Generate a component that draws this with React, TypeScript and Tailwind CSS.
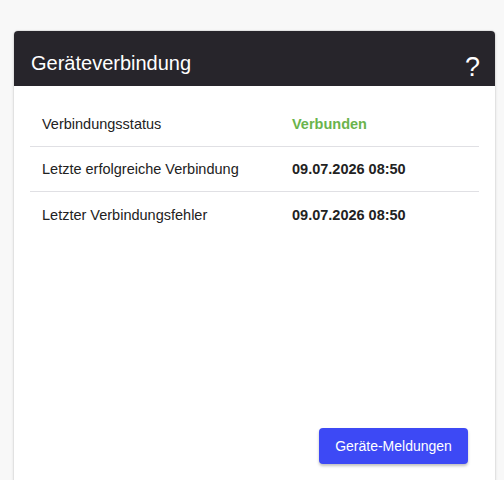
import { ReactNode } from 'react';

type Row = { label: string; value: ReactNode };

const rows: Row[] = [
  {
    label: 'Verbindungsstatus',
    value: <span className="text-[#6ab44c]">Verbunden</span>,
  },
  { label: 'Letzte erfolgreiche Verbindung', value: '09.07.2026 08:50' },
  { label: 'Letzter Verbindungsfehler', value: '09.07.2026 08:50' },
];

export default function App() {
  return (
    <div
      className="min-h-screen h-[480px] overflow-hidden bg-[#f8f8f8] pt-[30px] pl-[13px] pr-[8px]"
      style={{ fontFamily: '"Liberation Sans", Arial, sans-serif' }}
    >
      <div className="flex h-[460px] flex-col overflow-hidden rounded-[5px] border border-[#e2e2e2] bg-white shadow-[0_1px_3px_rgba(0,0,0,0.08)]">
        {/* header */}
        <div className="flex h-[55px] items-end justify-between bg-[#27252b] pl-[17px] pr-[15px] pb-[10px] text-white">
          <h2 className="text-[20px] leading-[26px]">Geräteverbindung</h2>
          <button className="text-[27px] leading-[18px]">?</button>
        </div>

        <div className="flex flex-1 flex-col px-4 pt-4">
          <div>
            {rows.map((r, i) => (
              <div
                key={r.label}
                className={`grid h-[45px] grid-cols-[250px_1fr] items-center pt-[2px] text-[14.5px] text-[#222] ${
                  i < rows.length - 1 ? 'border-b border-[#e0e0e4]' : ''
                }`}
              >
                <div className="pl-3">{r.label}</div>
                <div className="pl-3 font-bold">{r.value}</div>
              </div>
            ))}
          </div>

          <div className="mt-auto flex justify-end pb-[25px] pr-[11px]">
            <button className="h-[36px] w-[149px] rounded-[4px] bg-[#3d49f5] text-[14px] text-white shadow-[0_2px_3px_rgba(0,0,0,0.25)]">
              Geräte-Meldungen
            </button>
          </div>
        </div>
      </div>
    </div>
  );
}
